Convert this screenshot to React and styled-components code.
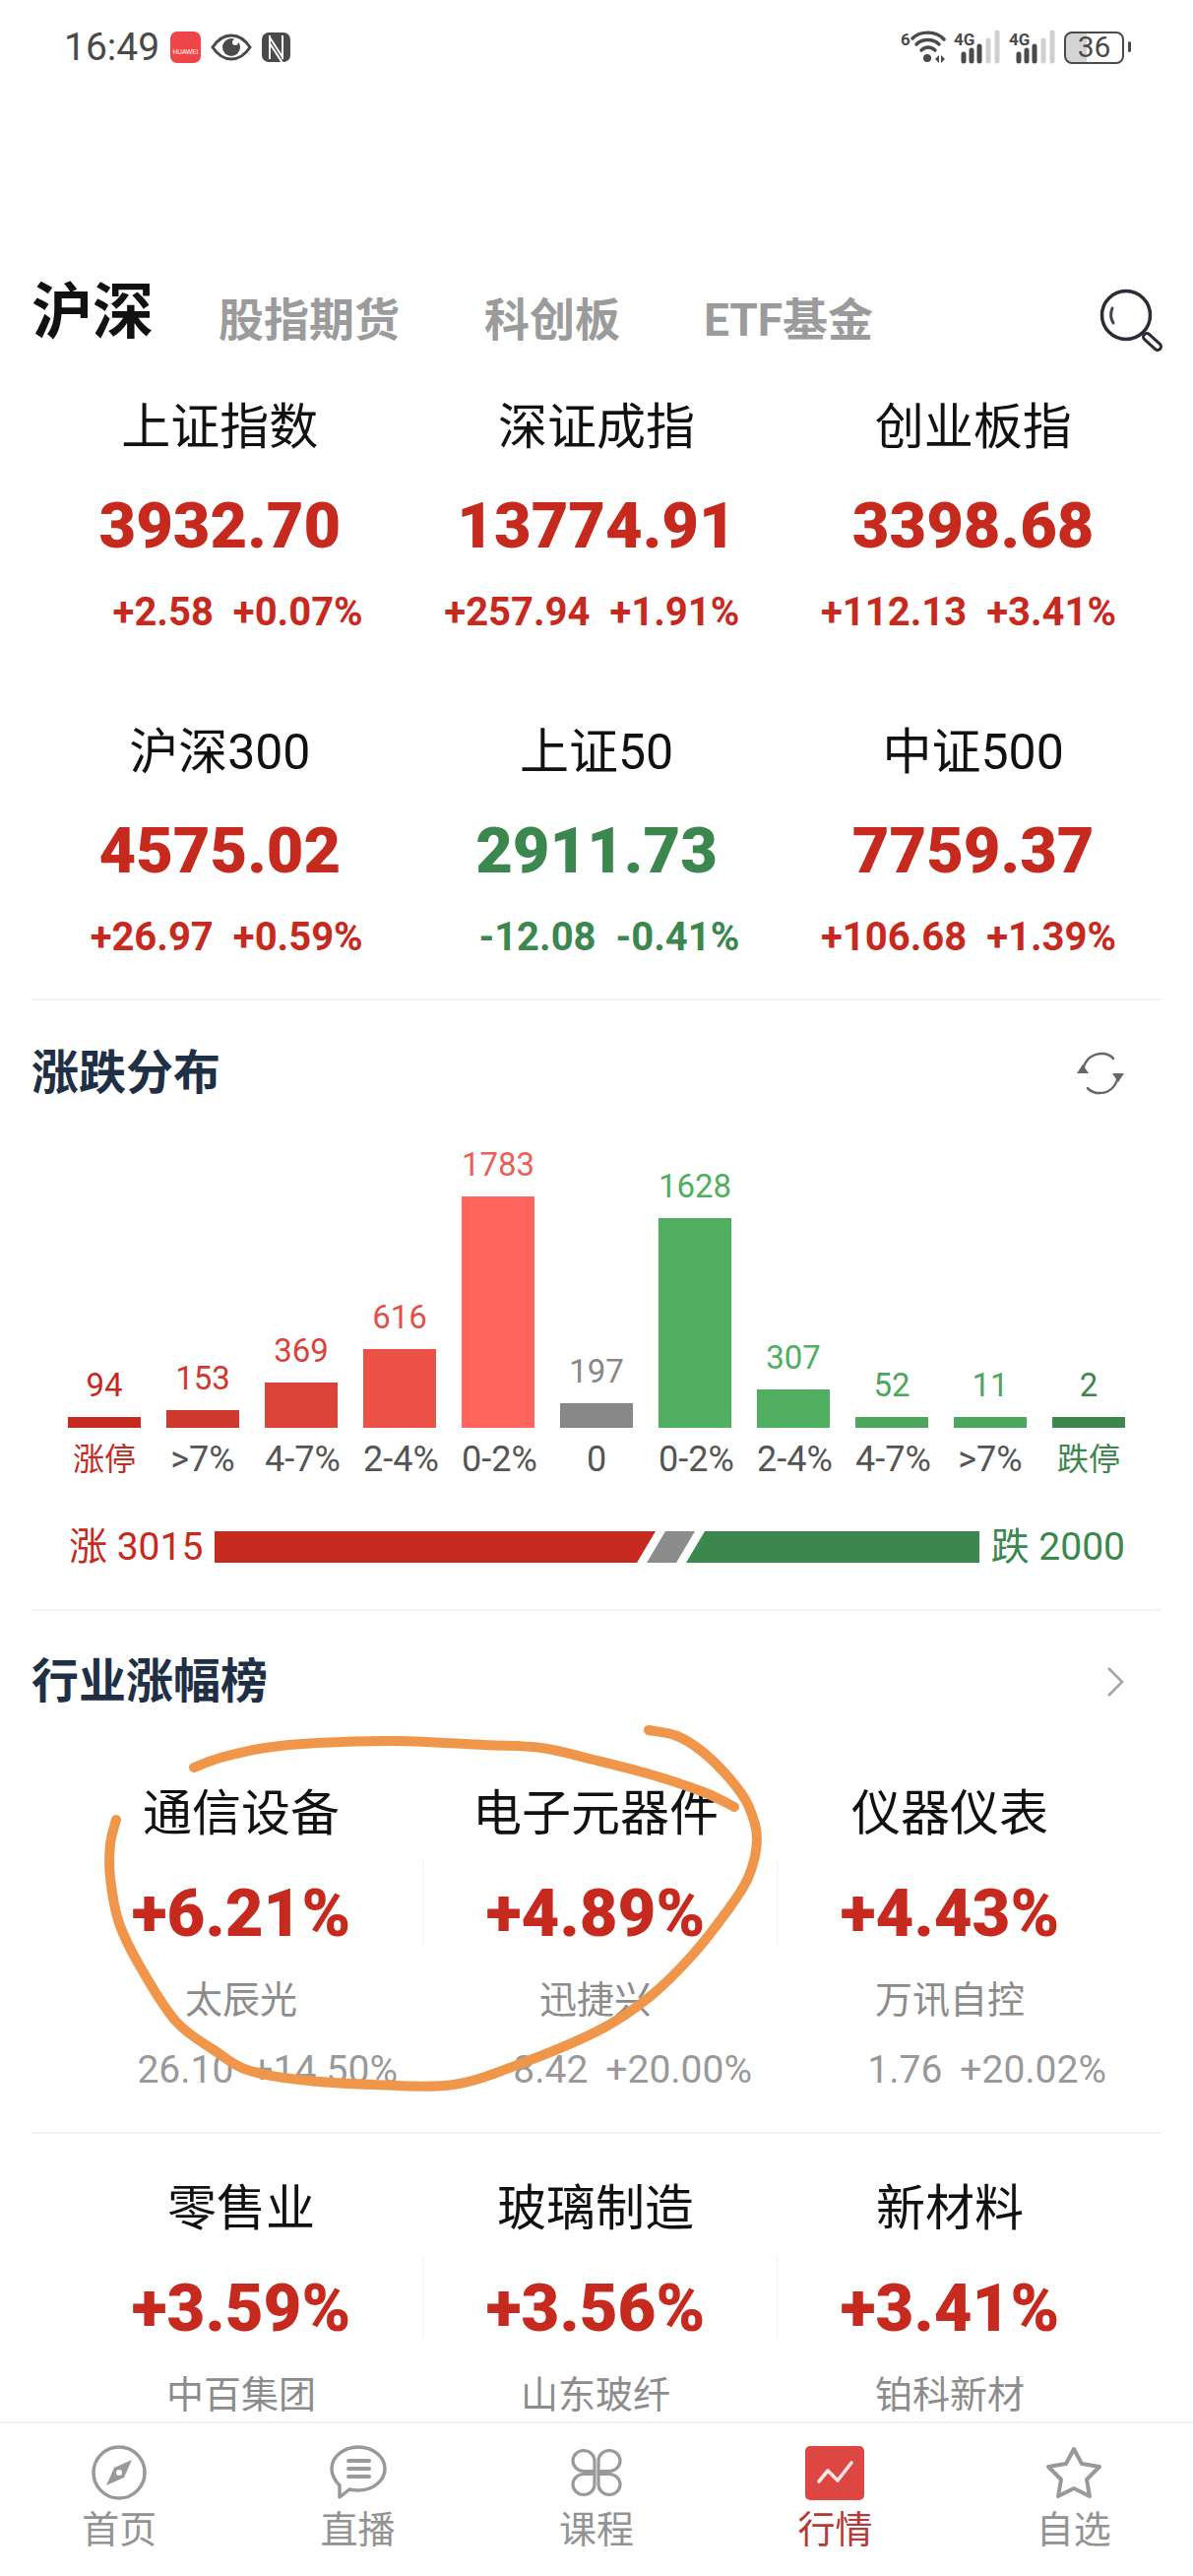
import React from "react";
import styled, { createGlobalStyle } from "styled-components";

const RED = "#c62a1e";
const GREEN = "#3b874d";
const NAVY = "#1f2f45";
const CJK = `Roboto, "Noto Sans CJK SC", sans-serif`;

const GlobalStyle = createGlobalStyle`
  html, body {
    margin: 0;
    padding: 0;
    background: #fff;
  }
  body {
    font-family: ${CJK};
  }
`;

const Page = styled.div`
  position: relative;
  width: 1212px;
  height: 2616px;
  overflow: hidden;
  display: flex;
  flex-direction: column;
  background: #fff;
`;

const Content = styled.main`
  flex: 1;
  min-height: 0;
  overflow: hidden;
  padding: 0 32px;
`;

/* status bar */
const StatusBar = styled.header`
  height: 96px;
  padding: 0 64px 0 65px;
  display: flex;
  align-items: center;
  justify-content: space-between;
  color: #4a4a4a;
`;

const StatusGroup = styled.div`
  display: flex;
  align-items: center;
  gap: ${(p) => p.$gap || 10}px;
`;

const Clock = styled.span`
  font-size: 39px;
  line-height: 40px;
  width: 98px;
`;

const AppBadge = styled.div`
  width: 31px;
  height: 32px;
  border-radius: 7px;
  background: #ee4548;
  color: #fff;
  font: 6.5px/1 "Liberation Sans", sans-serif;
  display: flex;
  flex-direction: column;
  align-items: center;
  justify-content: flex-end;
  padding-bottom: 8px;
  box-sizing: border-box;
`;

const Battery = styled.div`
  position: relative;
  width: 61px;
  height: 33px;
  border: 2.5px solid #4a4a4a;
  border-radius: 8px;
  box-sizing: border-box;
  font-size: 30px;
  line-height: 28px;
  text-align: center;
  color: #4a4a4a;
  background: linear-gradient(to right, #d4d4d4 0 36%, #fff 36% 100%);
  margin-right: 6px;
  &::after {
    content: "";
    position: absolute;
    right: -9px;
    top: 8px;
    width: 3px;
    height: 11px;
    border-radius: 2px;
    background: #4a4a4a;
  }
`;

/* tabs */
const Tabs = styled.nav`
  margin-top: 182px;
  height: 78px;
  display: flex;
  align-items: flex-end;
  position: relative;
`;

const Tab = styled.span`
  font-size: ${(p) => (p.$active ? 62 : 46)}px;
  line-height: ${(p) => (p.$active ? 76 : 62)}px;
  font-weight: 700;
  color: ${(p) => (p.$active ? "#111" : "#9b9b9b")};
  margin-right: ${(p) => p.$gap}px;
`;

const SearchButton = styled.div`
  margin-left: auto;
  margin-right: -2px;
  margin-bottom: -4px;
  display: flex;
`;

/* index grid */
const IndexGrid = styled.section`
  margin-top: 48px;
  display: grid;
  grid-template-columns: repeat(3, 1fr);
  row-gap: 90px;
  padding-bottom: 40px;
  border-bottom: 2px solid #f3f3f3;
`;

const IndexCell = styled.div`
  display: flex;
  flex-direction: column;
`;

const IndexName = styled.div`
  text-align: center;
  font-size: 50px;
  line-height: 60px;
  color: #111;
`;

const IndexValue = styled.div`
  margin-top: 35px;
  text-align: center;
  font-size: 65px;
  line-height: 70px;
  font-weight: 900;
  color: ${(p) => (p.$down ? GREEN : RED)};
`;

const IndexChange = styled.div`
  margin-top: 31px;
  padding-right: 46px;
  display: flex;
  justify-content: flex-end;
  gap: 20px;
  font-size: 40px;
  line-height: 44px;
  font-weight: 700;
  color: ${(p) => (p.$down ? GREEN : RED)};
`;

/* section headings */
const SectionHead = styled.div`
  display: flex;
  align-items: center;
  justify-content: space-between;
  height: 60px;
  margin-top: ${(p) => p.$top}px;
`;

const SectionTitle = styled.h2`
  margin: 0;
  font-size: 48px;
  line-height: 60px;
  font-weight: 700;
  color: ${NAVY};
`;

/* distribution chart */
const Chart = styled.div`
  padding-left: 37px;
  height: 330px;
  display: flex;
  align-items: flex-end;
  gap: 26px;
`;

const ChartCol = styled.div`
  width: 74px;
  display: flex;
  flex-direction: column;
  align-items: center;
`;

const ChartNum = styled.span`
  font-size: 33px;
  line-height: 40px;
  margin-bottom: 12px;
  color: ${(p) => p.$color};
`;

const ChartBar = styled.div`
  width: 100%;
  height: ${(p) => p.$h}px;
  background: ${(p) => p.$color};
`;

const AxisRow = styled.div`
  margin-top: 10px;
  padding-left: 37px;
  display: flex;
  gap: 26px;
`;

const AxisLabel = styled.span`
  width: 74px;
  text-align: center;
  white-space: nowrap;
  font-size: ${(p) => (p.$color ? 32 : 36)}px;
  line-height: 44px;
  color: ${(p) => p.$color || "#555"};
`;

const Summary = styled.div`
  margin-top: 47px;
  padding: 0 37px 0 38px;
  display: flex;
  align-items: center;
  height: 40px;
`;

const SummaryText = styled.span`
  font-size: 39px;
  line-height: 40px;
  white-space: nowrap;
  width: 148px;
  text-align: ${(p) => p.$align || "left"};
  color: ${(p) => p.$color};
`;

const Ratio = styled.div`
  flex: 1;
  height: 32px;
  display: flex;
`;

const RatioUp = styled.div`
  width: 448px;
  background: ${RED};
  clip-path: polygon(0 0, 100% 0, calc(100% - 19px) 100%, 0 100%);
`;

const RatioFlat = styled.div`
  width: 49px;
  margin-left: -9px;
  background: #8c8c8c;
  clip-path: polygon(19px 0, 100% 0, calc(100% - 19px) 100%, 0 100%);
`;

const RatioDown = styled.div`
  flex: 1;
  margin-left: -9px;
  background: ${GREEN};
  clip-path: polygon(19px 0, 100% 0, 100% 100%, 0 100%);
`;

const Rule = styled.div`
  margin-top: ${(p) => p.$top}px;
  height: 2px;
  background: #f3f3f3;
`;

/* industry board */
const BoardRow = styled.div`
  margin-top: ${(p) => p.$top}px;
  padding-left: 33px;
  display: grid;
  grid-template-columns: repeat(3, 360px);
`;

const BoardCell = styled.div`
  position: relative;
  display: flex;
  flex-direction: column;
  &:not(:last-child)::after {
    content: "";
    position: absolute;
    right: -6px;
    top: 78px;
    height: 86px;
    width: 2px;
    background: #f8f8f8;
  }
`;

const BoardName = styled.div`
  text-align: center;
  font-size: 50px;
  line-height: 60px;
  color: #111;
`;

const BoardPct = styled.div`
  margin-top: 36px;
  text-align: center;
  font-size: 67px;
  line-height: 70px;
  font-weight: 900;
  color: ${RED};
`;

const BoardStock = styled.div`
  margin-top: 30px;
  text-align: center;
  font-size: 38px;
  line-height: 46px;
  color: #8c8c8c;
`;

const BoardQuote = styled.div`
  margin-top: 26px;
  padding-right: 21px;
  display: flex;
  justify-content: flex-end;
  gap: 18px;
  font-size: 39px;
  line-height: 44px;
  color: #999;
`;

/* bottom nav */
const BottomNav = styled.nav`
  height: 157px;
  flex: none;
  box-sizing: border-box;
  border-top: 2px solid #f3f3f3;
  background: #fff;
  display: grid;
  grid-template-columns: repeat(5, 1fr);
`;

const NavItem = styled.div`
  display: flex;
  flex-direction: column;
  align-items: center;
`;

const NavIconSlot = styled.div`
  height: 56px;
  margin-top: 22px;
  display: flex;
  align-items: center;
  justify-content: center;
`;

const NavLabel = styled.span`
  margin-top: 7px;
  font-size: 38px;
  line-height: 46px;
  color: ${(p) => (p.$active ? "#b53a38" : "#939393")};
`;

const Scribble = styled.svg`
  position: absolute;
  left: 0;
  top: 0;
  pointer-events: none;
`;

const indices = [
  { name: "上证指数", value: "3932.70", a: "+2.58", b: "+0.07%" },
  { name: "深证成指", value: "13774.91", a: "+257.94", b: "+1.91%" },
  { name: "创业板指", value: "3398.68", a: "+112.13", b: "+3.41%" },
  { name: "沪深300", value: "4575.02", a: "+26.97", b: "+0.59%" },
  { name: "上证50", value: "2911.73", a: "-12.08", b: "-0.41%", down: true },
  { name: "中证500", value: "7759.37", a: "+106.68", b: "+1.39%" },
];

const bars = [
  { n: 94, h: 11, c: "#c62a1e", label: "涨停", lc: RED },
  { n: 153, h: 18, c: "#d03a2e", label: ">7%" },
  { n: 369, h: 46, c: "#db4338", label: "4-7%" },
  { n: 616, h: 80, c: "#ec5147", label: "2-4%" },
  { n: 1783, h: 235, c: "#ff655d", label: "0-2%" },
  { n: 197, h: 25, c: "#888888", label: "0" },
  { n: 1628, h: 213, c: "#4fae60", label: "0-2%" },
  { n: 307, h: 39, c: "#4fae60", label: "2-4%" },
  { n: 52, h: 11, c: "#4ca65c", label: "4-7%" },
  { n: 11, h: 11, c: "#4ca65c", label: ">7%" },
  { n: 2, h: 11, c: GREEN, label: "跌停", lc: GREEN },
];

const numColor = ["#c62a1e", "#d03a2e", "#d8443a", "#e2524a", "#ea6058", "#888", "#4fae60", "#4fae60", "#4ca65c", "#4ca65c", GREEN];

const boardTop = [
  { name: "通信设备", pct: "+6.21%", stock: "太辰光", price: "26.10", chg: "+14.50%" },
  { name: "电子元器件", pct: "+4.89%", stock: "迅捷兴", price: "8.42", chg: "+20.00%" },
  { name: "仪器仪表", pct: "+4.43%", stock: "万讯自控", price: "1.76", chg: "+20.02%" },
];

const boardNext = [
  { name: "零售业", pct: "+3.59%", stock: "中百集团" },
  { name: "玻璃制造", pct: "+3.56%", stock: "山东玻纤" },
  { name: "新材料", pct: "+3.41%", stock: "铂科新材" },
];

// catmull-rom through the hand drawn points
const smooth = (pts) => {
  let d = `M${pts[0][0]} ${pts[0][1]}`;
  for (let i = 0; i < pts.length - 1; i++) {
    const p0 = pts[i - 1] || pts[i];
    const p1 = pts[i];
    const p2 = pts[i + 1];
    const p3 = pts[i + 2] || p2;
    const c1x = p1[0] + (p2[0] - p0[0]) / 6;
    const c1y = p1[1] + (p2[1] - p0[1]) / 6;
    const c2x = p2[0] - (p3[0] - p1[0]) / 6;
    const c2y = p2[1] - (p3[1] - p1[1]) / 6;
    d += ` C${c1x} ${c1y} ${c2x} ${c2y} ${p2[0]} ${p2[1]}`;
  }
  return d;
};

const topStroke = [[197, 1795], [224, 1785], [269, 1775], [322, 1770], [402, 1768], [492, 1772], [550, 1775], [603, 1787], [661, 1802], [715, 1820], [746, 1835]];
const mainStroke = [[659, 1757], [688, 1763], [715, 1780], [742, 1807], [760, 1833], [769, 1867], [760, 1907], [737, 1943], [702, 1987], [661, 2027], [612, 2060], [536, 2093], [461, 2117], [380, 2117], [304, 2112], [251, 2102], [219, 2083], [179, 2053], [144, 2000], [121, 1953], [112, 1907], [112, 1873], [118, 1848]];

const EyeIcon = () => (
  <svg width="42" height="28" viewBox="0 0 42 28">
    <path d="M2 14C8 5 14 2 21 2s13 3 19 12c-6 9-12 12-19 12S8 23 2 14z" fill="none" stroke="#4a4a4a" strokeWidth="3" />
    <circle cx="21" cy="14" r="9" fill="#4a4a4a" />
    <circle cx="25" cy="9" r="3" fill="#fff" />
  </svg>
);

const NfcIcon = () => (
  <svg width="29" height="30" viewBox="0 0 29 30">
    <rect width="29" height="30" rx="7" fill="#4a4a4a" />
    <path d="M8 3v24M21 3v24M8 5l13 20M8 11l13 20" stroke="#fff" strokeWidth="2" fill="none" />
  </svg>
);

const WifiIcon = () => (
  <svg width="46" height="34" viewBox="0 0 46 34">
    <text x="0" y="15" fontSize="17" fontWeight="700" fontFamily="Roboto, sans-serif" fill="#4a4a4a">6</text>
    <g fill="none" stroke="#4a4a4a" strokeWidth="3.4" strokeLinecap="round">
      <path d="M12 8C20 0 36 0 44 9" />
      <path d="M16 14C22 8 33 8 39 14" />
      <path d="M21 20C25 16 31 16 35 20" />
    </g>
    <circle cx="27" cy="28" r="4" fill="#4a4a4a" />
    <path d="M35 29l4-4v8zM41 25l4 4-4 4z" fill="#4a4a4a" />
  </svg>
);

const SignalIcon = () => (
  <svg width="48" height="34" viewBox="0 0 48 34">
    <text x="0" y="15" fontSize="17" fontWeight="700" fontFamily="Roboto, sans-serif" fill="#4a4a4a">4G</text>
    <g strokeWidth="5" strokeLinecap="round">
      <path d="M10 24v7M18 20v11M26 16v15" stroke="#4a4a4a" />
      <path d="M35 10v21M44 2v29" stroke="#cfcfcf" />
    </g>
  </svg>
);

const SearchIcon = () => (
  <svg width="66" height="68" viewBox="0 0 66 68" fill="none">
    <circle cx="28" cy="28" r="24.5" stroke="#2c2c36" strokeWidth="3.5" />
    <path d="M14 21c-2 5-2 10 1 15" stroke="#44444e" strokeWidth="3" strokeLinecap="round" />
    <path d="M49 50l11 10" stroke="#2c2c36" strokeWidth="10" strokeLinecap="round" />
    <path d="M49 50l11 10" stroke="#fff" strokeWidth="4" strokeLinecap="round" />
  </svg>
);

const RefreshIcon = () => (
  <svg width="52" height="52" viewBox="0 0 52 52" fill="none" style={{ marginRight: 36 }}>
    <path d="M8 22C11 11 19 5 30 6c4 1 7 2 9 5" stroke="#666" strokeWidth="2.5" strokeLinecap="round" />
    <path d="M44 30c-3 11-11 17-22 16-4-1-7-2-9-5" stroke="#666" strokeWidth="2.5" strokeLinecap="round" />
    <path d="M2 26l6-9 6 9zM38 26l6 9 6-9z" fill="#666" />
  </svg>
);

const ChevronIcon = () => (
  <svg width="20" height="32" viewBox="0 0 20 32" fill="none" style={{ marginRight: 37 }}>
    <path d="M3 2l14 14L3 30" stroke="#a6a6a6" strokeWidth="2.6" />
  </svg>
);

const CompassIcon = () => (
  <svg width="56" height="56" viewBox="0 0 56 56" fill="none">
    <circle cx="28" cy="28" r="26" stroke="#999" strokeWidth="3.5" />
    <path d="M41 15L33 33 15 41l8-18z" fill="#999" />
    <circle cx="28" cy="28" r="3" fill="#fff" />
  </svg>
);

const ChatIcon = () => (
  <svg width="60" height="56" viewBox="0 0 60 56" fill="none">
    <path d="M11 53V41C6 36 3 30 3 24 3 12 15 2 30 2s27 10 27 22-12 22-27 22c-3 0-6 0-9-1z" stroke="#999" strokeWidth="3.5" strokeLinejoin="round" />
    <path d="M20 16h21M20 24h21M20 32h21" stroke="#999" strokeWidth="4" strokeLinecap="round" />
  </svg>
);

const CloverIcon = () => (
  <svg width="52" height="50" viewBox="0 0 52 50" fill="none" stroke="#999" strokeWidth="3.2">
    <path d="M24 23.5H13a11 10.5 0 1 1 11-10.5z" />
    <path d="M28 23.5h11a11 10.5 0 1 0-11-10.5z" />
    <path d="M24 26.5H13a11 10.5 0 1 0 11 10.5z" />
    <path d="M28 26.5h11a11 10.5 0 1 1-11 10.5z" />
  </svg>
);

const ChartTabIcon = () => (
  <svg width="60" height="55" viewBox="0 0 60 55">
    <rect width="60" height="55" rx="5" fill="#dc4643" />
    <path d="M14 36l9-11 10 10 14-18" stroke="#fbe6e4" strokeWidth="3.6" fill="none" strokeLinejoin="round" strokeLinecap="round" />
  </svg>
);

const StarIcon = () => (
  <svg width="58" height="56" viewBox="0 0 58 56" fill="none">
    <path d="M29 4l8 15 18 3-13 13 3 17-16-8-16 8 3-17L3 22l18-3z" stroke="#999" strokeWidth="4" strokeLinejoin="round" />
  </svg>
);

const navItems = [
  { label: "首页", Icon: CompassIcon },
  { label: "直播", Icon: ChatIcon },
  { label: "课程", Icon: CloverIcon },
  { label: "行情", Icon: ChartTabIcon, active: true },
  { label: "自选", Icon: StarIcon },
];

const App = () => (
  <Page>
    <GlobalStyle />
    <StatusBar>
      <StatusGroup>
        <Clock>16:49</Clock>
        <AppBadge>HUAWEI</AppBadge>
        <EyeIcon />
        <NfcIcon />
      </StatusGroup>
      <StatusGroup $gap={8}>
        <WifiIcon />
        <SignalIcon />
        <SignalIcon />
        <Battery>36</Battery>
      </StatusGroup>
    </StatusBar>

    <Content>
      <Tabs>
        <Tab $active $gap={66}>沪深</Tab>
        <Tab $gap={86}>股指期货</Tab>
        <Tab $gap={85}>科创板</Tab>
        <Tab>ETF基金</Tab>
        <SearchButton><SearchIcon /></SearchButton>
      </Tabs>

      <IndexGrid>
        {indices.map((it) => (
          <IndexCell key={it.name}>
            <IndexName>{it.name}</IndexName>
            <IndexValue $down={it.down}>{it.value}</IndexValue>
            <IndexChange $down={it.down}>
              <span>{it.a}</span>
              <span>{it.b}</span>
            </IndexChange>
          </IndexCell>
        ))}
      </IndexGrid>

      <SectionHead $top={44}>
        <SectionTitle>涨跌分布</SectionTitle>
        <RefreshIcon />
      </SectionHead>
      <Chart>
        {bars.map((b, i) => (
          <ChartCol key={i}>
            <ChartNum $color={numColor[i]}>{b.n}</ChartNum>
            <ChartBar $h={b.h} $color={b.c} />
          </ChartCol>
        ))}
      </Chart>
      <AxisRow>
        {bars.map((b, i) => (
          <AxisLabel key={i} $color={b.lc}>{b.label}</AxisLabel>
        ))}
      </AxisRow>
      <Summary>
        <SummaryText $color={RED}>涨 3015</SummaryText>
        <Ratio>
          <RatioUp />
          <RatioFlat />
          <RatioDown />
        </Ratio>
        <SummaryText $color={GREEN} $align="right">跌 2000</SummaryText>
      </Summary>
      <Rule $top={43} />

      <SectionHead $top={42}>
        <SectionTitle>行业涨幅榜</SectionTitle>
        <ChevronIcon />
      </SectionHead>
      <BoardRow $top={74}>
        {boardTop.map((it) => (
          <BoardCell key={it.name}>
            <BoardName>{it.name}</BoardName>
            <BoardPct>{it.pct}</BoardPct>
            <BoardStock>{it.stock}</BoardStock>
            <BoardQuote>
              <span>{it.price}</span>
              <span>{it.chg}</span>
            </BoardQuote>
          </BoardCell>
        ))}
      </BoardRow>
      <Rule $top={41} />
      <BoardRow $top={46}>
        {boardNext.map((it) => (
          <BoardCell key={it.name}>
            <BoardName>{it.name}</BoardName>
            <BoardPct>{it.pct}</BoardPct>
            <BoardStock>{it.stock}</BoardStock>
          </BoardCell>
        ))}
      </BoardRow>
    </Content>

    <BottomNav>
      {navItems.map(({ label, Icon, active }) => (
        <NavItem key={label}>
          <NavIconSlot><Icon /></NavIconSlot>
          <NavLabel $active={active}>{label}</NavLabel>
        </NavItem>
      ))}
    </BottomNav>

    <Scribble width="1212" height="2616" viewBox="0 0 1212 2616" fill="none">
      <path d={smooth(topStroke)} stroke="#f0964a" strokeWidth="10" strokeLinecap="round" />
      <path d={smooth(mainStroke)} stroke="#f0964a" strokeWidth="10" strokeLinecap="round" />
    </Scribble>
  </Page>
);

export default App;
